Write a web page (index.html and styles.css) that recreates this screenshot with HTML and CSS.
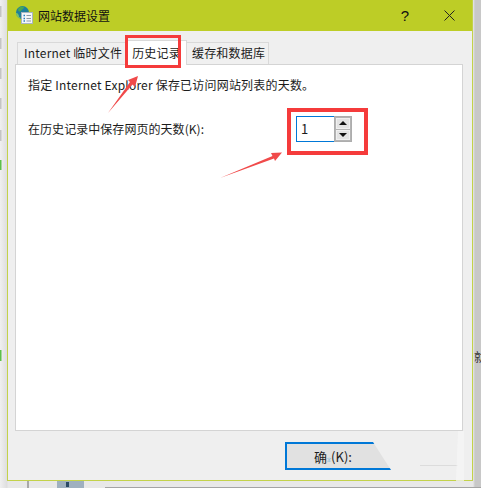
FILE: index.html
```html
<!DOCTYPE html>
<html lang="zh">
<head>
<meta charset="utf-8">
<title>网站数据设置</title>
<link rel="stylesheet" href="styles.css">
</head>
<body>
<div class="desktop">
  <div class="dialog">
    <header class="titlebar">
      <svg class="app-icon" width="17" height="18" viewBox="0 0 17 18">
        <circle cx="6.500" cy="6.500" r="6.500" fill="#1f7f9c"/>
        <path d="M2 3c2-3 5-3 6-2 0 2-2 2-3 4-1 1-3 1-3-2z" fill="#4aa84f"/>
        <path d="M0 7c2 0 3 2 3 4l2 1-2 0C1 11 0 9 0 7z" fill="#7cc46a"/>
        <rect x="5.500" y="6.500" width="11" height="11" fill="#f4f6f8" stroke="#a8b5c0"/>
        <path d="M7.500 9.500h1.500M7.500 12.500h1.500M7.500 15h1.500" stroke="#2a7fc0" stroke-width="1.500"/>
        <path d="M10.500 9.500h4.500M10.500 12.500h4.500M10.500 15h4.500" stroke="#8d9aa5"/>
      </svg>
      <span class="title">网站数据设置</span>
      <span class="help">?</span>
      <svg class="close" width="11" height="11" viewBox="0 0 11 11"><path d="M.5.500l10 10M10.500.500l-10 10" stroke="#222" fill="none"/></svg>
    </header>
    <div class="body">
      <nav class="tabs">
        <span class="tab tab-first">Internet 临时文件</span>
        <span class="tab tab-active">历史记录</span>
        <span class="tab">缓存和数据库</span>
      </nav>
      <section class="panel">
        <p class="desc">指定 Internet Explorer 保存已访问网站列表的天数。</p>
        <div class="row">
          <label class="label">在历史记录中保存网页的天数(K):</label>
          <div class="spinner">
            <span class="spin-input">1</span>
            <span class="spin-btns">
              <span class="spin-btn"><i class="arrow-up"></i></span>
              <span class="spin-btn"><i class="arrow-down"></i></span>
            </span>
          </div>
        </div>
      </section>
      <footer class="actions">
        <button class="ok">确<span class="smudged">定</span>(K):</button>
        <span class="cancel"></span>
      </footer>
    </div>
  </div>
  <span class="behind-char">就</span>
  <svg class="marks" width="481" height="488" viewBox="0 0 481 488">
    <g fill="none" stroke="#f53b3b">
      <rect x="126.500" y="36.500" width="53" height="30" stroke-width="3"/>
      <rect x="289" y="110" width="77" height="43" stroke-width="4"/>
    </g>
    <path d="M108 113L130 82 128 80 138 76 135 87 132.500 84.500Z" fill="#f04a4a"/>
    <path d="M220 178L272.500 156 271 153 282 152.500 275 161 274 158.500Z" fill="#f04a4a"/>
    <g fill="#c4c4c4">
      <rect x="0" y="6" width="1.500" height="11"/>
      <rect x="0" y="38" width="1.500" height="11"/>
      <rect x="0" y="68" width="1.500" height="11"/>
      <rect x="0" y="98" width="1.500" height="11"/>
      <rect x="0" y="130" width="1.500" height="11"/>
    </g>
    <rect x="0" y="160" width="1.500" height="10" fill="#5cc04a"/>
    <rect x="0" y="350" width="1.500" height="11" fill="#5cc04a"/>
    <rect x="27" y="481" width="2" height="7" fill="#a8a8a8"/>
    <rect x="57" y="481" width="27" height="7" fill="#9fb0bf"/>
    <rect x="66" y="482" width="3" height="5" fill="#2b4a66"/>
    <rect x="105" y="487" width="376" height="1" fill="#a4a4a4"/>
    <path d="M458 431h6v50h-8z" fill="#f7f7f7" opacity=".7"/>
  </svg>
</div>
</body>
</html>
```
FILE: styles.css
```css
* { box-sizing: border-box; }
html, body { margin: 0; padding: 0; }
body {
  width: 481px;
  height: 488px;
  overflow: hidden;
  font-family: "Noto Sans CJK SC", "Liberation Sans", sans-serif;
  font-size: 12px;
  color: #1c1c1c;
}
.desktop {
  position: relative;
  width: 481px;
  height: 488px;
  padding: 0 8px 7px 7px;
  background: linear-gradient(90deg, #f0f0f0 0, #dedede 7px, #e8e8e8 8px, #e8e8e8 473px, #c8c8c8 475px, #c8c8c8 481px);
}
.dialog {
  display: flex;
  flex-direction: column;
  height: 481px;
  border: 1px solid #c3d24a;
  border-top: 0;
  background: #efefef;
}
.titlebar {
  display: flex;
  align-items: center;
  height: 31px;
  padding: 0 17px 0 8px;
  background: #bdcd26;
}
.app-icon { flex: none; margin-top: -1px; }
.title { margin-left: 5px; font-size: 12px; color: #111; flex: 1; }
.help { margin-right: 35px; font: 15px "Liberation Sans", sans-serif; color: #111; }
.close { flex: none; }
.body {
  flex: 1;
  display: flex;
  flex-direction: column;
  padding: 10px 9px 0 7px;
}
.tabs {
  display: flex;
  height: 23px;
  padding-left: 2px;
}
.tab {
  height: 23px;
  margin-top: 1px;
  padding: 0 5px;
  line-height: 20px;
  font-size: 12px;
  letter-spacing: .2px;
  border: 1px solid #d9d9d9;
  border-right: 0;
  border-bottom: 0;
  background: #f0f0f0;
  white-space: nowrap;
}
.tab-first { padding-left: 6px; padding-right: 4px; }
.tab:last-child { border-right: 1px solid #d9d9d9; padding-right: 3px; }
.tab-active {
  height: 25px;
  margin-top: -1px;
  padding: 0 5px;
  line-height: 24px;
  background: #fff;
  border-right: 1px solid #d9d9d9;
  position: relative;
}
.tab-active + .tab { border-left: 0; }
.panel {
  height: 367px;
  padding: 11px 12px;
  background: #fff;
  border: 1px solid #d4d4d4;
}
.desc {
  margin: 0;
  line-height: 17px;
  font-size: 12px;
  letter-spacing: .2px;
}
.row {
  display: flex;
  align-items: flex-start;
  margin-top: 24px;
}
.label {
  width: 268px;
  line-height: 17px;
  margin-top: 3px;
  font-size: 12px;
  letter-spacing: .05px;
}
.spinner {
  display: flex;
  height: 26px;
  width: 56px;
  margin-top: -1px;
}
.spin-input {
  width: 38px;
  padding-left: 4px;
  line-height: 24px;
  font-size: 13px;
  border: 1px solid #0078d7;
  border-right: 0;
  background: #fff;
}
.spin-btns {
  display: flex;
  flex-direction: column;
  gap: 1px;
  width: 18px;
  padding: 1px;
  border: 1px solid #adadad;
  background: #b4b4b4;
}
.spin-btn {
  flex: 1;
  display: flex;
  align-items: center;
  justify-content: center;
  background: #e3e3e3;
  border: 1px solid #f0f0f0;
}
.arrow-up, .arrow-down {
  width: 0;
  height: 0;
  border-left: 4px solid transparent;
  border-right: 4px solid transparent;
}
.arrow-up { border-bottom: 4px solid #111; }
.arrow-down { border-top: 4px solid #111; }
.actions {
  display: flex;
  padding-top: 11px;
  padding-left: 270px;
}
.ok {
  width: 106px;
  height: 28px;
  padding: 0 12px 0 0;
  font-family: inherit;
  font-size: 13px;
  text-align: center;
  color: #1c1c1c;
  background: #e1e1e1;
  border: 2px solid #0078d7;
  border-right: 0;
  clip-path: polygon(0 0, 83% 0, 100% 100%, 0 100%);
}
.smudged {
  font-size: 4px;
  color: #5aa9dc;
}
.cancel {
  width: 38px;
  height: 24px;
  margin-left: 29px;
  border-bottom: 1px solid #dcdcdc;
}
.behind-char {
  position: absolute;
  left: 474px;
  top: 349px;
  width: 7px;
  overflow: hidden;
  font-size: 12px;
  line-height: 16px;
  color: #333;
}
.marks {
  position: absolute;
  left: 0;
  top: 0;
  pointer-events: none;
}
```
